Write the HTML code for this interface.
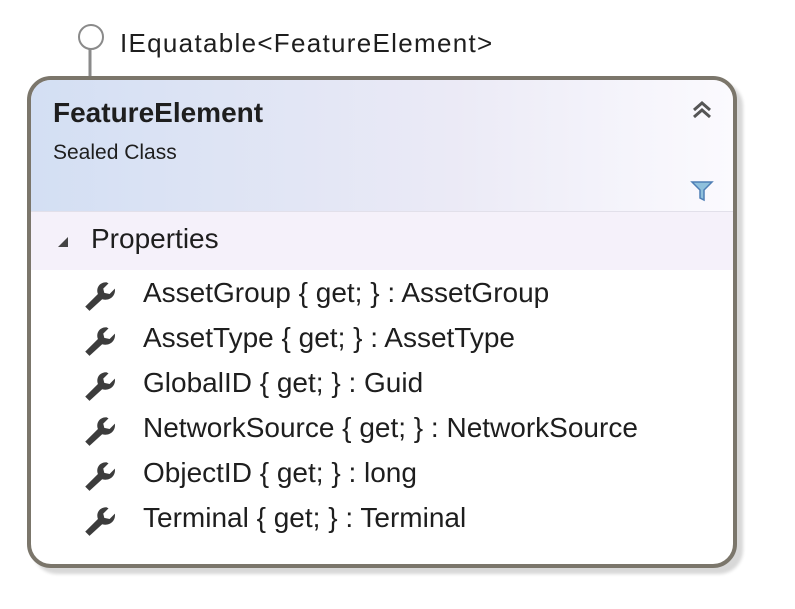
<!DOCTYPE html>
<html><head><style>
html,body{margin:0;padding:0;background:#fff;width:795px;height:609px;overflow:hidden;font-family:"Liberation Sans",sans-serif;color:#1e1e1e}
.abs{position:absolute}
.box{left:27px;top:76px;width:702px;height:484px;border:4px solid #7b766b;border-radius:24px;background:#fff;box-shadow:6px 6px 3px #d8d8d8;overflow:hidden}
.hdr{position:absolute;left:0;top:0;right:0;height:131px;background:linear-gradient(to right,#d3dff3,#ebeaf6 60%,#fbfafe);border-bottom:1px solid #e2e0ea}
.props{position:absolute;left:0;top:132px;right:0;height:58px;background:#f5f1fa}
.row{position:absolute;left:112px;font-size:28px;white-space:nowrap}
.w{position:absolute;left:50px}
</style></head><body>
<svg class="abs" style="left:76px;top:22px" width="32" height="56"><circle cx="15" cy="15" r="12" fill="#fff" stroke="#8a8a8a" stroke-width="2"/><line x1="14" y1="27" x2="14" y2="56" stroke="#8a8a8a" stroke-width="3"/></svg>
<div class="abs" style="left:120px;top:28px;font-size:26px;letter-spacing:1.3px">IEquatable&lt;FeatureElement&gt;</div>
<div class="abs box">
 <div class="hdr"></div>
 <div class="abs" style="left:22px;top:17px;font-size:28px;font-weight:bold">FeatureElement</div>
 <div class="abs" style="left:22px;top:61px;font-size:21px">Sealed Class</div>
 <svg class="abs" style="left:660px;top:20px" width="22" height="20"><path d="M3 10 L11 3 L19 10 M3 17 L11 10 L19 17" fill="none" stroke="#555" stroke-width="3"/></svg>
 <svg class="abs" style="left:659px;top:100px" width="24" height="22"><path d="M2 2 H22 L14 10 V20 L10 18 V10 Z" fill="#8fc0dc" stroke="#4f7fb5" stroke-width="1.5"/></svg>
 <div class="props"></div>
 <svg class="abs" style="left:25px;top:155px" width="14" height="14"><path d="M12 2 V12 H2 Z" fill="#444"/></svg>
 <div class="abs" style="left:60px;top:143px;font-size:28px">Properties</div>
 <div id="rows"></div>
</div>
<script>
var r=["AssetGroup { get; } : AssetGroup","AssetType { get; } : AssetType","GlobalID { get; } : Guid","NetworkSource { get; } : NetworkSource","ObjectID { get; } : long","Terminal { get; } : Terminal"];
var h="";r.forEach(function(t,i){var y=197+i*45;
h+='<svg class="w" style="top:'+(y+1)+'px" width="36" height="34" viewBox="0 0 34 32"><path d="M4 27 L16 15 C14 10 17 4 24 4 L26 5 L21 10 L22 14 L27 15 L32 10 C33 17 27 22 20 20 L8 31 Z" fill="#3c3c3c"/></svg>';
h+='<div class="row" style="top:'+y+'px">'+t+'</div>';});
document.getElementById("rows").innerHTML=h;
</script>
</body></html>
